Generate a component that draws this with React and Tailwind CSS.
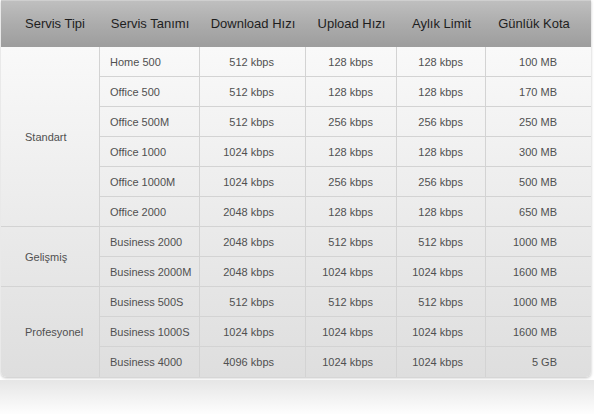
import React from "react";

const rows = [
  ["Home 500", "512 kbps", "128 kbps", "128 kbps", "100 MB"],
  ["Office 500", "512 kbps", "128 kbps", "128 kbps", "170 MB"],
  ["Office 500M", "512 kbps", "256 kbps", "256 kbps", "250 MB"],
  ["Office 1000", "1024 kbps", "128 kbps", "128 kbps", "300 MB"],
  ["Office 1000M", "1024 kbps", "256 kbps", "256 kbps", "500 MB"],
  ["Office 2000", "2048 kbps", "128 kbps", "128 kbps", "650 MB"],
  ["Business 2000", "2048 kbps", "512 kbps", "512 kbps", "1000 MB"],
  ["Business 2000M", "2048 kbps", "1024 kbps", "1024 kbps", "1600 MB"],
  ["Business 500S", "512 kbps", "512 kbps", "512 kbps", "1000 MB"],
  ["Business 1000S", "1024 kbps", "1024 kbps", "1024 kbps", "1600 MB"],
  ["Business 4000", "4096 kbps", "1024 kbps", "1024 kbps", "5 GB"],
];

const groups = [
  { name: "Standart", start: 0, span: 6 },
  { name: "Gelişmiş", start: 6, span: 2 },
  { name: "Profesyonel", start: 8, span: 3 },
];

const spanClass = { 6: "row-span-6", 2: "row-span-2", 3: "row-span-3" };

const colPad = ["pl-[10px] justify-start", "pr-[31px] justify-end", "pr-[23px] justify-end", "pr-[22px] justify-end", "pr-[34px] justify-end"];

export default function App() {
  return (
    <div
      className="w-[594px] h-[414px] bg-white overflow-hidden"
      style={{ fontFamily: '"Liberation Sans", Arial, sans-serif' }}
    >
      <div className="ml-[1px] w-[590px] rounded-b-[5px] overflow-hidden shadow-[0_1px_3px_rgba(0,0,0,0.25)] bg-gradient-to-b from-[#fdfdfd] to-[#dedede]">
        <div className="grid grid-cols-[99px_100px_106px_91px_89px_105px] h-[47px] bg-gradient-to-b from-[#bfbfbf] via-[#acacac] to-[#9d9d9d] border-t border-[#cfcfcf] text-[13px] text-[#1e1e1e]">
          <div className="flex items-center pl-[24px]">Servis Tipi</div>
          <div className="flex items-center justify-center">Servis Tanımı</div>
          <div className="flex items-center justify-center">Download Hızı</div>
          <div className="flex items-center justify-center">Upload Hızı</div>
          <div className="flex items-center justify-center">Aylık Limit</div>
          <div className="flex items-center justify-center pr-[9px]">Günlük Kota</div>
        </div>
        <div className="grid grid-cols-[99px_100px_106px_91px_89px_105px] grid-rows-[repeat(11,30px)] text-[11px] text-[#505050]">
          {groups.map((g, gi) => (
            <div
              key={g.name}
              className={`${spanClass[g.span]} col-start-1 flex items-center pl-[24px] pt-[1px] border-r border-[#d3d3d3] ${gi < groups.length - 1 ? "border-b" : ""}`}
              style={{ gridRowStart: g.start + 1 }}
            >
              {g.name}
            </div>
          ))}
          {rows.map((r, ri) =>
            r.map((c, ci) => (
              <div
                key={ri + "-" + ci}
                className={`flex items-center pt-[1px] ${colPad[ci]} border-[#d3d3d3] ${ci < 4 ? "border-r" : ""} ${ri < rows.length - 1 ? "border-b" : ""}`}
                style={{ gridRowStart: ri + 1, gridColumnStart: ci + 2 }}
              >
                {c}
              </div>
            ))
          )}
        </div>
      </div>
      <div className="mt-[3px] h-[36px] bg-gradient-to-b from-[#e6e6e6] to-[#ffffff]"></div>
    </div>
  );
}
